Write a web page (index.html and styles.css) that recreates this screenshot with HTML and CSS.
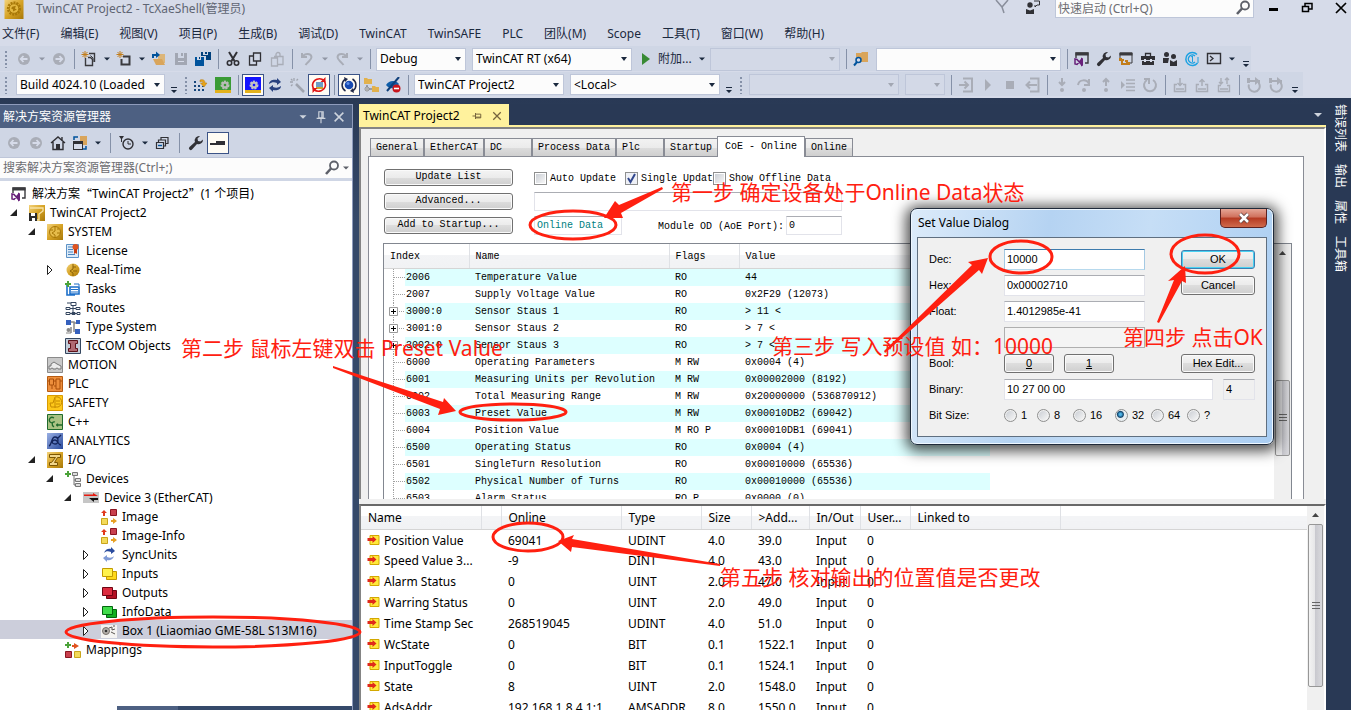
FILE: index.html
```html
<!DOCTYPE html>
<html lang="zh-CN">
<head>
    <meta charset="UTF-8">
    <meta name="viewport" content="width=device-width, initial-scale=1.0">
    <title>TwinCAT Project2 - TcXaeShell</title>
    <link rel="stylesheet" href="styles.css">
</head>
<body>
    <!-- icon sprite -->
    <svg class="sprite" aria-hidden="true">
        <defs>
            <linearGradient id="gold" x1="0" y1="0" x2="1" y2="1"><stop offset="0" stop-color="#f3d27a"/><stop offset=".5" stop-color="#d6a326"/><stop offset="1" stop-color="#a87808"/></linearGradient>
            <linearGradient id="steel" x1="0" y1="0" x2="1" y2="1"><stop offset="0" stop-color="#9ab0e4"/><stop offset="1" stop-color="#27499c"/></linearGradient>
            <symbol id="i-app" viewBox="0 0 20 20"><rect width="20" height="20" fill="url(#gold)"/><circle cx="10" cy="9" r="6" fill="none" stroke="#a87808" stroke-width="3" stroke-dasharray="2 1"/><circle cx="10" cy="9" r="5" fill="#e3b740" stroke="#a87808"/><path d="M8 7l4-1-1 3 2 1-4 2 0-2-2-1z" fill="#a87808"/></symbol>
            <symbol id="i-back" viewBox="0 0 16 16"><circle cx="8" cy="8" r="6" fill="#a9adb7"/><path d="M11.500 8H5M7.500 5L4.700 8l2.800 3" fill="none" stroke="#d6dbe9" stroke-width="1.800"/></symbol>
            <symbol id="i-fwd" viewBox="0 0 16 16"><circle cx="8" cy="8" r="6" fill="#a9adb7"/><path d="M4.500 8H11M8.500 5l2.800 3-2.800 3" fill="none" stroke="#d6dbe9" stroke-width="1.800"/></symbol>
            <symbol id="i-new" viewBox="0 0 16 16"><path d="M8 2.500h5.500V11M4.500 7v7.500h7v-6l-2-2H7" fill="none" stroke="#3a3a3e" stroke-width="1.400"/><path d="M9.500 4.500L12 7v4" fill="none" stroke="#3a3a3e"/><path d="M4 0v7M.5 3.500h7M1.500 1l5 5M6.500 1l-5 5" stroke="#c27d1a"/></symbol>
            <symbol id="i-add" viewBox="0 0 16 16"><path d="M7 5.500h6.500v8h-8V8" fill="none" stroke="#3a3a3e" stroke-width="2"/><path d="M4 0v7M.5 3.500h7M1.500 1l5 5M6.500 1l-5 5" stroke="#c27d1a"/></symbol>
            <symbol id="i-open" viewBox="0 0 16 16"><path d="M7 3h7v9H7z" fill="#dcb67a"/><path d="M2 8h9l3 6H5z" fill="#d9a55b"/><path d="M2 7V4h4" fill="none" stroke="#00539c" stroke-width="2"/><path d="M5 .5L9 4 5 7z" fill="#00539c"/></symbol>
            <symbol id="i-save" viewBox="0 0 16 16"><path d="M2 2h3v5h6V2h3v12H2z" fill="#a2a7b3"/><path d="M8 2h2v3H8z" fill="#a2a7b3"/><path d="M5 10h6v1H5z" fill="#d6dbe9"/></symbol>
            <symbol id="i-saveall" viewBox="0 0 16 16"><path d="M6 1h2v3h5V1h3v8h-5V5H6z" fill="#00407c"/><path d="M10 1h2v2h-2z" fill="#00407c"/><path d="M0 6h2v3h4V6h3v9H0z" fill="#00539c"/><path d="M4 6h1v2H4z" fill="#00407c"/></symbol>
            <symbol id="i-cut" viewBox="0 0 16 16"><path d="M4 1l5.500 9M12 1L6.500 10" stroke="#303035" stroke-width="2"/><circle cx="4.500" cy="12" r="2.200" fill="none" stroke="#303035" stroke-width="1.600"/><circle cx="11.500" cy="12" r="2.200" fill="none" stroke="#303035" stroke-width="1.600"/></symbol>
            <symbol id="i-copy" viewBox="0 0 16 16"><path d="M6.500 10V2h7v8zM6 5H2.500v9h7v-4" fill="none" stroke="#303035" stroke-width="1.300"/></symbol>
            <symbol id="i-paste" viewBox="0 0 16 16"><path d="M5 5.500h9v8H8.500M2.500 7h6v8h-6zM7 5V3.500a2 2 0 0 1 4 0V5" fill="none" stroke="#a9adb7" stroke-width="1.300"/></symbol>
            <symbol id="i-undo" viewBox="0 0 16 16"><path d="M3 2v4h5M3.500 5.500C6 2 12 2 12.500 6c0 3-3 4-6 8" fill="none" stroke="#a9adb7" stroke-width="2"/></symbol>
            <symbol id="i-redo" viewBox="0 0 16 16"><path d="M13 2v4H8M12.500 5.500C10 2 4 2 3.500 6c0 3 3 4 6 8" fill="none" stroke="#a9adb7" stroke-width="2"/></symbol>
            <symbol id="i-play" viewBox="0 0 16 16"><path d="M4 2l8 6-8 6z" fill="#388a34"/></symbol>
            <symbol id="i-find" viewBox="0 0 16 16"><path d="M3 2h5l1-1h6v10H8V6H3z" fill="#d9a55b"/><circle cx="5.500" cy="9" r="2.500" fill="#d6dbe9" stroke="#00539c" stroke-width="1.500"/><path d="M4 11l-3 3.500" stroke="#00539c" stroke-width="2"/></symbol>
            <symbol id="i-vs" viewBox="0 0 16 16"><path d="M2 7V2h12v10h-3" fill="none" stroke="#3a3a3e" stroke-width="1.400"/><path d="M1.500 1.500h13v3h-13z" fill="#3a3a3e"/><path d="M1 8v5l2 .5L7 9v4L3 8.500z" fill="none" stroke="#68217a" stroke-width="1.500"/><path d="M7 6.500l2 1v7l-2 1z" fill="#68217a"/></symbol>
            <symbol id="i-wrench" viewBox="0 0 16 16"><path d="M15 4.500a4.500 4.500 0 0 1-6 4.500L4 14.500a1.700 1.700 0 0 1-2.500-2.500L7 7a4.500 4.500 0 0 1 5-6L9.500 3.500l.500 2.500 2.500.5z" fill="#303035"/></symbol>
            <symbol id="i-props" viewBox="0 0 16 16"><path d="M2 7V2h12v10h-2" fill="none" stroke="#3a3a3e"/><path d="M1.500 1.500h13v3h-13z" fill="#3a3a3e"/><path d="M2 9h4M4 9v4h4M7 10h3" stroke="#c27d1a" stroke-width="2" fill="none"/><path d="M8 11h4v3H8zM1 7h3v3H1z" fill="#c27d1a"/></symbol>
            <symbol id="i-toolbox" viewBox="0 0 16 16"><path d="M5.500 5V2.500h5V5" fill="none" stroke="#303035" stroke-width="1.300"/><path d="M1 5h14v4H1zM2 10h12v4H2z" fill="#303035"/><path d="M4 8h2v3H4zM10 8h2v3h-2z" fill="#d6dbe9"/></symbol>
            <symbol id="i-team" viewBox="0 0 16 16"><circle cx="4.500" cy="3.500" r="2.500" fill="#303035"/><circle cx="11.500" cy="5.500" r="2.500" fill="#303035"/><path d="M1 7h6l-1 5H1zM8 9l3.500 2L15 9v6H8z" fill="#303035"/></symbol>
            <symbol id="i-c1" viewBox="0 0 16 16"><path d="M13 3.500a6.500 6.500 0 1 0 .5 8.500" fill="none" stroke="#1ba1e2" stroke-width="1.500"/><path d="M11 5a4 4 0 1 0 0 6" fill="none" stroke="#1ba1e2" stroke-width="1.400"/><path d="M7 6l1.500-1v6M14 6v6" stroke="#1ba1e2" fill="none"/></symbol>
            <symbol id="i-cmd" viewBox="0 0 16 16"><path d="M1.500 2.500h13v10h-13z" fill="none" stroke="#303035" stroke-width="1.400"/><path d="M4 5l3 2.500L4 10" fill="none" stroke="#303035" stroke-width="1.300"/></symbol>
            <symbol id="i-grid" viewBox="0 0 16 16"><path d="M1 4h2v2H1zM1 8h2v2H1zM1 12h2v2H1zM5 8h2v2H5zM5 12h2v2H5zM9 12h2v2H9zM9 9h2v1H9z" fill="#17467a"/><path d="M7 3c3-1 5 0 5 3h2l-3 4-3.500-4H10c0-1-1-2-3-1z" fill="#e8a317" stroke="#b97a09" stroke-width=".5"/></symbol>
            <symbol id="i-run" viewBox="0 0 16 16"><path d="M0 0h16v13H0z" fill="#3a9b35"/><path d="M0 13h16v3H0z" fill="#e3b21c"/><circle cx="10" cy="8" r="3.500" fill="#b9bcb9" stroke="#b9bcb9" stroke-width="2" stroke-dasharray="2 1"/><circle cx="10" cy="8" r="1.300" fill="#3a9b35"/></symbol>
            <symbol id="i-config" viewBox="0 0 16 16"><path d="M0 0h16v13H0z" fill="#1414ff"/><path d="M0 13h16v3H0z" fill="#e3b21c"/><circle cx="9" cy="8" r="3.500" fill="#c3c3c3" stroke="#c3c3c3" stroke-width="2" stroke-dasharray="2 1"/><circle cx="9" cy="8" r="1.300" fill="#1414ff"/></symbol>
            <symbol id="i-sync" viewBox="0 0 16 16"><path d="M2 7c0-4 5-5 8-4V1l4 4-4 3V6C7 5 5 5 2 7zM14 9c0 4-5 5-8 4v2l-4-4 4-3v2c3 1 5 1 8-1z" fill="#27407f"/></symbol>
            <symbol id="i-syncunit" viewBox="0 0 16 16"><path d="M3 6c1-4 5-5 7-4V0l4 4-4 3V5C7 4 5 4 3 6z" fill="#2a4c9e"/><path d="M13 9c-1 4-5 5-7 4v2l-4-4 4-3v2c3 1 5 1 7-1z" fill="#7f9ad6"/></symbol>
            <symbol id="i-wand" viewBox="0 0 16 16"><path d="M7 7l8 8" stroke="#a0a4af" stroke-width="2.500"/><path d="M5 1v3M1 5h3M2 2l1.500 1.500M9 2L7.500 3.500M2 9l1.500-1.500" stroke="#a0a4af" stroke-width="1.300"/></symbol>
            <symbol id="i-reload" viewBox="0 0 16 16"><path d="M5 5h7v5H5z" fill="#6d9ec7"/><path d="M5 10h7v2H5z" fill="#cfa52a"/><path d="M13 3.500A7 7 0 0 0 1.500 8c0 2 .5 3 1.500 4.500M3 12.500A7 7 0 0 0 14.500 8c0-2-.5-3-1.500-4.500" fill="none" stroke="#e01414" stroke-width="1.700"/><path d="M14.500 0v5h-5zM1.500 16v-5h5z" fill="#e01414"/></symbol>
            <symbol id="i-orbit" viewBox="0 0 16 16"><circle cx="8" cy="8" r="4.300" fill="#1749b0"/><circle cx="7" cy="6.500" r="1.500" fill="#5c8de8"/><path d="M4.500 14A7 7 0 0 1 4 2.300M11.500 2A7 7 0 0 1 12 13.700" fill="none" stroke="#202848" stroke-width="1.500"/><path d="M3 0l4 2-3 3zM13 16l-4-2 3-3z" fill="#202848"/></symbol>
            <symbol id="i-map" viewBox="0 0 16 16"><path d="M1 1h3l1 1h4v5H1zM9 9h3l1 1h3v5H9z" fill="#e2b14c"/><circle cx="4" cy="12" r="2" fill="#fff" stroke="#888"/><path d="M3 12h2M4 8v2M6 12h3" stroke="#666"/></symbol>
            <symbol id="i-hide" viewBox="0 0 16 16"><path d="M1 8c3-5 10-5 13-1-3 5-9 6-13 1z" fill="#0f5da8"/><path d="M14 0L2 14" stroke="#0f3f7a" stroke-width="2"/><circle cx="11.500" cy="11.500" r="4" fill="#c8161d"/><path d="M9 11.500h5" stroke="#fff" stroke-width="1.600"/></symbol>
            <symbol id="i-login" viewBox="0 0 16 16"><path d="M5 1.500h9v13H5M1 8h8M6.500 4.500L10 8l-3.500 3.500" fill="none" stroke="#a9adb7" stroke-width="2"/></symbol>
            <symbol id="i-logout" viewBox="0 0 16 16"><path d="M6 1.500h8.500v13H6M13 8H3M6 4.500L2.500 8 6 11.500" fill="none" stroke="#a9adb7" stroke-width="2"/></symbol>
            <symbol id="i-start" viewBox="0 0 16 16"><path d="M5 2l6 6-6 6z" fill="#a9adb7"/></symbol>
            <symbol id="i-stop" viewBox="0 0 16 16"><path d="M4 4h8v8H4z" fill="#a9adb7"/></symbol>
            <symbol id="i-into" viewBox="0 0 16 16"><path d="M8 1v7M5 5l3 3 3-3" fill="none" stroke="#a9adb7" stroke-width="2"/><circle cx="8" cy="13" r="2" fill="#a9adb7"/></symbol>
            <symbol id="i-over" viewBox="0 0 16 16"><path d="M2 8c1-6 9-6 11-1M13 2v6H8" fill="none" stroke="#a9adb7" stroke-width="2"/><circle cx="8" cy="13" r="2" fill="#a9adb7"/></symbol>
            <symbol id="i-out" viewBox="0 0 16 16"><path d="M8 9V2M5 5l3-3 3 3" fill="none" stroke="#a9adb7" stroke-width="2"/><circle cx="8" cy="13" r="2" fill="#a9adb7"/></symbol>
            <symbol id="i-lines" viewBox="0 0 16 16"><path d="M1 4l4 4-4 4z" fill="#a9adb7"/><path d="M6 3h9M6 6.500h9M6 10h9M6 13.500h9" stroke="#a9adb7" stroke-width="1.400"/></symbol>
            <symbol id="i-cycle" viewBox="0 0 16 16"><path d="M5 3a6 6 0 1 0 6 0M2 2h5v5" fill="none" stroke="#a9adb7" stroke-width="2"/></symbol>
            <symbol id="i-tray1" viewBox="0 0 16 16"><path d="M5 7.500H2.500v7h11v-7H11M4 12h8M8 1v7M5.500 6L8 8.500 10.500 6" fill="none" stroke="#a9adb7" stroke-width="1.500"/></symbol>
            <symbol id="i-tray2" viewBox="0 0 16 16"><path d="M5 7.500H2.500v7h11v-7H11M4 12h8M8 9V2M5.500 5L8 2.500 10.500 5" fill="none" stroke="#a9adb7" stroke-width="1.500"/></symbol>
            <symbol id="i-tray3" viewBox="0 0 16 16"><path d="M5 8.500H2.500v6h11v-6H11M4 12h8M5 1v6M3 5l2 2 2-2M11 7V1M9 3l2-2 2 2" fill="none" stroke="#a9adb7" stroke-width="1.400"/></symbol>
            <symbol id="i-loop" viewBox="0 0 16 16"><path d="M1 4h9M3 7.500a5.500 5.500 0 1 0 10-1V4h-2" fill="none" stroke="#a9adb7" stroke-width="2"/><path d="M9 0l5 4-5 4zM1 1h3v5H1z" fill="#a9adb7"/></symbol>
            <symbol id="i-home" viewBox="0 0 16 16"><path d="M1 8l7-6 7 6M3 7v7.500h10V7M12 2v4" fill="none" stroke="#303035" stroke-width="1.400"/><path d="M6 9h4v5H6z" fill="#303035"/></symbol>
            <symbol id="i-switch" viewBox="0 0 16 16"><path d="M8 1h7v9H8z" fill="#d9a55b"/><path d="M1 6h10v9H1z" fill="#303035"/><path d="M2 9h8v5H2z" fill="#d6dbe9"/><path d="M2 5V2h4M14 11v3h-3" fill="none" stroke="#00539c" stroke-width="1.500"/></symbol>
            <symbol id="i-clock" viewBox="0 0 16 16"><path d="M0 1h5L3 4v3H2V4z" fill="#303035"/><circle cx="9" cy="9" r="5" fill="none" stroke="#303035" stroke-width="1.400"/><path d="M9 6v3h3" fill="none" stroke="#303035"/></symbol>
            <symbol id="i-collapse" viewBox="0 0 16 16"><path d="M2.500 7.500h7v6h-7zM4.500 7V5h7v6H10M7 4.500V2.500h7v6h-2" fill="none" stroke="#303035" stroke-width="1.200"/><path d="M4 10.500h4" stroke="#00539c" stroke-width="1.400"/></symbol>
            <symbol id="i-minus" viewBox="0 0 16 16"><path d="M0 8h15v2H0zM6 6h9v4H6z" fill="#303035"/></symbol>
            <symbol id="i-mag" viewBox="0 0 16 16"><circle cx="10" cy="5.500" r="4" fill="none" stroke="#5d6069" stroke-width="1.800"/><path d="M7 8.500L2 14" stroke="#5d6069" stroke-width="2.600"/></symbol>
            <symbol id="i-x" viewBox="0 0 16 16"><path d="M3 3l10 10M13 3L3 13" stroke="currentColor" stroke-width="1.700"/></symbol>
            <symbol id="i-pin" viewBox="0 0 16 16"><path d="M5.500 2v7h5V2zM9 2v7M3 9.500h10M8 10v5" fill="none" stroke="currentColor" stroke-width="1.300"/></symbol>
            <symbol id="i-pinside" viewBox="0 0 16 16"><path d="M2 8h4M6 4v8M6 5.500h7v5H6M6 9.500h7" fill="none" stroke="currentColor" stroke-width="1.300"/></symbol>
            <symbol id="i-down" viewBox="0 0 16 16"><path d="M4 6h8l-4 4z" fill="currentColor"/></symbol>
            <symbol id="i-more" viewBox="0 0 16 16"><path d="M5 7h6v1H5zM5 10h6l-3 3z" fill="#1b293e"/></symbol>
            <symbol id="i-exp" viewBox="0 0 16 16"><path d="M10 4v7H3z" fill="#222"/></symbol>
            <symbol id="i-col" viewBox="0 0 16 16"><path d="M4.500 3.500v9L9 8z" fill="#fff" stroke="#222"/></symbol>
            <symbol id="i-flag" viewBox="0 0 16 16"><path d="M1 0l6 7 6-7M7 7l2 6" fill="none" stroke="#8a8f9c" stroke-width="1.500"/></symbol>
            <symbol id="i-user" viewBox="0 0 16 16"><circle cx="5" cy="5" r="2.700" fill="#303035"/><path d="M1 9l4 1.500L9 9v5H1z" fill="#303035"/><path d="M9 1h5.500v4H12l-2 2V5" fill="none" stroke="#303035"/></symbol>
            <!-- tree icons -->
            <symbol id="t-project" viewBox="0 0 16 16"><rect width="16" height="16" fill="url(#gold)"/><path d="M1 3h13v3l-4 3v6H8" fill="none" stroke="#f7e3a6" stroke-width="1.300"/><path d="M0 8h8v8H0z" fill="#2b2b2b"/><path d="M2 8h4v3H2zM3 13h3v3H3z" fill="#fff"/></symbol>
            <symbol id="t-system" viewBox="0 0 16 16"><rect width="16" height="16" fill="url(#gold)"/><circle cx="8" cy="8" r="5.500" fill="#e6bc4b" stroke="#a87808"/><path d="M8 2v5l-3 2 3 2v3M10 5h2M10 9h3M3 6h3" fill="none" stroke="#a87808"/></symbol>
            <symbol id="t-license" viewBox="0 0 16 16"><path d="M1.500 1.500h12v13h-12z" fill="#dcebf8" stroke="#5d92c6"/><path d="M3 4h5M3 6.500h5M3 9h5M3 11.500h7" stroke="#4a83bd"/><circle cx="10.500" cy="4" r="3" fill="#e0531f"/><path d="M9 6h3v5l-1.500-1L9 11z" fill="#c83f14"/></symbol>
            <symbol id="t-rt" viewBox="0 0 16 16"><circle cx="8" cy="8" r="6.500" fill="url(#gold)"/><path d="M8 2v5l-3 2 3 2v3M8 5h3M8 9h4" fill="none" stroke="#8b6207"/></symbol>
            <symbol id="t-tasks" viewBox="0 0 16 16"><path d="M2 4v10h8M5 6h9v7H5z" fill="#fff" stroke="#1c6fc9" stroke-width="1.600"/><path d="M6 8.500h7M6 11h7M9 3h5v2" stroke="#1c6fc9" fill="none"/><path d="M3 0v6M0 3h6" stroke="#4ca33a" stroke-width="2"/></symbol>
            <symbol id="t-routes" viewBox="0 0 16 16"><path d="M6 2.500h5v3H6zM1 7.500h4v2H1zM11 7.500h4v2h-4zM1 12.500h4v2H1zM7 12.500h3v2H7zM12 12.500h3v2h-3zM8 6v6M5 8.500h6M2 3h4M5 13.500h7" fill="none" stroke="#34465f"/></symbol>
            <symbol id="t-types" viewBox="0 0 16 16"><path d="M1 1h5v5H1zM11 1h4v4h-4zM10 10h5v5h-5z" fill="#3560bd"/><path d="M6 3h3v10M11 4H9M6 8v6" stroke="#888" fill="none" stroke-width="1.500"/><circle cx="3.500" cy="11" r="2" fill="#888"/><path d="M1 14h5" stroke="#888"/></symbol>
            <symbol id="t-tccom" viewBox="0 0 16 16"><path d="M.5 .5h15v15H.5z" fill="#c2ccd8" stroke="#34465f"/><path d="M3.500 2.500h9v3h-2v5h2v3h-9v-3h2v-5h-2z" fill="#b06a72" stroke="#5c1219"/></symbol>
            <symbol id="t-motion" viewBox="0 0 16 16"><path d="M.5 .5h15v15H.5z" fill="#c9c9c9" stroke="#8a8a8a"/><path d="M2 12V9h2V7l3-2 3 2 4 2v3h-3a1 1 0 0 0-2 0H6a1 1 0 0 0-2 0z" fill="#ececec" stroke="#777"/></symbol>
            <symbol id="t-plc" viewBox="0 0 16 16"><path d="M.5 .5h15v15H.5z" fill="#ee8f3c" stroke="#b65b12"/><path d="M2.500 3h4v6h-4zM9 3h4v10H9zM1 5h1M7 5h2M7 10h2M5 9v4M13 5h2" fill="none" stroke="#a94f0b"/></symbol>
            <symbol id="t-safety" viewBox="0 0 16 16"><path d="M.5 .5h15v15H.5z" fill="#fdc81a" stroke="#d99b00"/><path d="M8 2a5 5 0 0 1 3 10H4l-1-4h3zM8 3v10M9 6h4M9 9h4" fill="none" stroke="#c68a00"/></symbol>
            <symbol id="t-cpp" viewBox="0 0 16 16"><path d="M.5 .5h15v15H.5z" fill="#a9c283" stroke="#1f6a2b"/><path d="M7 4C4 2 1 5 3 8l2 1M8 8c-3-1-4 3-1 5M9 11h3M10.500 9.500v3M12 11h3" fill="none" stroke="#1f6a2b" stroke-width="1.300"/></symbol>
            <symbol id="t-analytics" viewBox="0 0 16 16"><rect width="16" height="16" fill="url(#steel)"/><path d="M2 13c3-1 2-9 6-9s4 7 0 7-3-4 0-4 3 5 6 5M10 6l4-4" fill="none" stroke="#12245c" stroke-width="1.300"/></symbol>
            <symbol id="t-io" viewBox="0 0 16 16"><rect width="16" height="16" fill="url(#gold)"/><path d="M2.500 2.500h11v3h-3l-3 5h3v3h-8v-3h2l4-5h-6z" fill="#f1d589" stroke="#7c5602"/></symbol>
            <symbol id="t-devices" viewBox="0 0 16 16"><path d="M7.500 1.500h5v3h-5zM10.500 7.500h5v3h-5zM10.500 12.500h5v3h-5zM9 5v9h1M9 9h1" fill="#ddd" stroke="#777"/><path d="M3 0v6M0 3h6" stroke="#4ca33a" stroke-width="2"/></symbol>
            <symbol id="t-ethercat" viewBox="0 0 16 16"><path d="M0 2h16v11H0z" fill="#c6c6c6"/><path d="M1 4.500h9V3l5 3H1z" fill="#e81b10"/><path d="M15 8H6l5 4v-2h4z" fill="#111"/></symbol>
            <symbol id="t-image" viewBox="0 0 16 16"><path d="M9.500 .5h6v6h-6z" fill="#c9404e" stroke="#8a1521"/><path d="M.5 9.500h6v6h-6z" fill="#f3da5a" stroke="#c9a51c"/><path d="M3 1l3 3H4v3H2V4H0z" fill="#e0391c"/><path d="M12 9v2h-2v2h2v2l4-3z" fill="#e7a023"/></symbol>
            <symbol id="t-in" viewBox="0 0 16 16"><path d="M5.500 5.500h10v8h-10z" fill="#ffd91a" stroke="#c29a00"/><path d="M1.500 2.500h10v8h-10z" fill="#fff34d" stroke="#c29a00"/></symbol>
            <symbol id="t-out" viewBox="0 0 16 16"><path d="M5.500 5.500h10v8h-10z" fill="#b30f22" stroke="#6e0512"/><path d="M1.500 2.500h10v8h-10z" fill="#dd2b3f" stroke="#6e0512"/></symbol>
            <symbol id="t-info" viewBox="0 0 16 16"><path d="M5.500 5.500h10v8h-10z" fill="#0faf22" stroke="#03660e"/><path d="M1.500 2.500h10v8h-10z" fill="#3fdc4a" stroke="#03660e"/></symbol>
            <symbol id="t-box" viewBox="0 0 16 16"><path d="M0 2h16v13H0z" fill="#f5f3f1"/><circle cx="5" cy="8" r="3.500" fill="#b5b0ab" stroke="#77706a"/><circle cx="5" cy="8" r="1.300" fill="#333"/><path d="M8 5l3-1v3l3-1M10 9l4 2M12 3h2" fill="none" stroke="#5a5550"/></symbol>
            <symbol id="t-mappings" viewBox="0 0 16 16"><path d="M.5 9.500h6v6h-6z" fill="#c9404e" stroke="#8a1521"/><path d="M9.500 9.500h6v6h-6z" fill="#f3da5a" stroke="#c9a51c"/><path d="M3 0v6M0 3h6" stroke="#4ca33a" stroke-width="2"/><path d="M7 3h2V1l5 3-5 3V5H7z" fill="#e0531f"/></symbol>
            <symbol id="t-var" viewBox="0 0 12 12"><path d="M2.500 1.500h9v9h-9z" fill="#ffe93b" stroke="#d3a800"/><path d="M0 4h5V2l4 3.500L5 9V7H0z" fill="#e02a1a"/></symbol>
            <symbol id="t-leaf" viewBox="0 0 21 17"><path d="M9.500 0v17" stroke="#a0a0a0" stroke-dasharray="1 1"/><path d="M10 8.500h11" stroke="#a0a0a0" stroke-dasharray="1 1"/></symbol>
            <symbol id="t-plus" viewBox="0 0 21 17"><path d="M9.500 0v17M13 8.500h8" stroke="#a0a0a0" stroke-dasharray="1 1"/><path d="M5.500 4.500h8v8h-8z" fill="#fff" stroke="#9a9a9a"/><path d="M7 8.500h5M9.500 6v5" stroke="#000"/></symbol>
        </defs>
    </svg>

    <header>
        <div class="titlebar">
            <svg class="app-icon"><use href="#i-app"/></svg>
            <span class="title">TwinCAT Project2 - TcXaeShell(管理员)</span>
            <div class="title-tools">
                <svg class="icon"><use href="#i-flag"/></svg>
                <svg class="icon"><use href="#i-user"/></svg>
                <div class="quick">
                    <input type="text" placeholder="快速启动 (Ctrl+Q)" aria-label="快速启动">
                    <svg class="icon"><use href="#i-mag"/></svg>
                </div>
                <button class="win" aria-label="最小化"><svg class="icon" viewBox="0 0 16 16"><path d="M4 8h9v3H4z"/></svg></button>
                <button class="win" aria-label="还原"><svg class="icon" viewBox="0 0 16 16"><path d="M6 6V3.500h7V9h-3M3.500 6.500h6v5h-6z" fill="none" stroke="#000" stroke-width="1.500"/></svg></button>
                <button class="win" aria-label="关闭"><svg class="icon"><use href="#i-x"/></svg></button>
            </div>
        </div>
        <nav class="menu">
            <a href="#">文件(F)</a><a href="#">编辑(E)</a><a href="#">视图(V)</a><a href="#">项目(P)</a><a href="#">生成(B)</a><a href="#">调试(D)</a><a href="#">TwinCAT</a><a href="#">TwinSAFE</a><a href="#">PLC</a><a href="#">团队(M)</a><a href="#">Scope</a><a href="#">工具(T)</a><a href="#">窗口(W)</a><a href="#">帮助(H)</a>
        </nav>
        <div class="toolbar">
            <span class="grip"></span>
            <button class="tool" aria-label="后退"><svg class="icon"><use href="#i-back"/></svg></button>
            <button class="drop off" aria-label="后退列表"><svg class="icon"><use href="#i-down"/></svg></button>
            <button class="tool" aria-label="前进"><svg class="icon"><use href="#i-fwd"/></svg></button>
            <span class="sep"></span>
            <button class="tool" aria-label="新建项目"><svg class="icon"><use href="#i-new"/></svg></button>
            <button class="drop" aria-label="新建列表"><svg class="icon"><use href="#i-down"/></svg></button>
            <button class="tool" aria-label="添加项"><svg class="icon"><use href="#i-add"/></svg></button>
            <button class="drop" aria-label="添加列表"><svg class="icon"><use href="#i-down"/></svg></button>
            <button class="tool" aria-label="打开"><svg class="icon"><use href="#i-open"/></svg></button>
            <button class="tool" aria-label="保存"><svg class="icon"><use href="#i-save"/></svg></button>
            <button class="tool" aria-label="全部保存"><svg class="icon"><use href="#i-saveall"/></svg></button>
            <span class="sep"></span>
            <button class="tool" aria-label="剪切"><svg class="icon"><use href="#i-cut"/></svg></button>
            <button class="tool" aria-label="复制"><svg class="icon"><use href="#i-copy"/></svg></button>
            <button class="tool" aria-label="粘贴"><svg class="icon"><use href="#i-paste"/></svg></button>
            <span class="sep"></span>
            <button class="tool" aria-label="撤消"><svg class="icon"><use href="#i-undo"/></svg></button>
            <button class="drop off" aria-label="撤消列表"><svg class="icon"><use href="#i-down"/></svg></button>
            <button class="tool" aria-label="重做"><svg class="icon"><use href="#i-redo"/></svg></button>
            <button class="drop off" aria-label="重做列表"><svg class="icon"><use href="#i-down"/></svg></button>
            <span class="sep"></span>
            <select class="combo w90" aria-label="配置"><option>Debug</option></select>
            <select class="combo w160" aria-label="平台"><option>TwinCAT RT (x64)</option></select>
            <button class="attach"><svg class="icon"><use href="#i-play"/></svg>附加...<svg class="icon"><use href="#i-down"/></svg></button>
            <select class="combo w130" aria-label="进程" disabled><option></option></select>
            <span class="sep"></span>
            <button class="tool" aria-label="在文件中查找"><svg class="icon"><use href="#i-find"/></svg></button>
            <select class="combo w185" aria-label="查找"><option></option></select>
            <span class="sep"></span>
            <button class="tool" aria-label="解决方案"><svg class="icon"><use href="#i-vs"/></svg></button>
            <button class="tool" aria-label="属性"><svg class="icon"><use href="#i-wrench"/></svg></button>
            <button class="tool" aria-label="对象"><svg class="icon"><use href="#i-props"/></svg></button>
            <button class="tool" aria-label="工具箱"><svg class="icon"><use href="#i-toolbox"/></svg></button>
            <button class="tool" aria-label="团队"><svg class="icon"><use href="#i-team"/></svg></button>
            <button class="tool" aria-label="起始页"><svg class="icon"><use href="#i-c1"/></svg></button>
            <button class="tool" aria-label="命令窗口"><svg class="icon"><use href="#i-cmd"/></svg></button>
            <button class="drop" aria-label="窗口列表"><svg class="icon"><use href="#i-down"/></svg></button>
            <button class="more" aria-label="工具栏选项"><svg class="icon"><use href="#i-more"/></svg></button>
        </div>
        <div class="toolbar second">
            <span class="grip"></span>
            <select class="combo w149 end" aria-label="版本"><option>Build 4024.10 (Loaded</option></select>
            <button class="more" aria-label="工具栏选项"><svg class="icon"><use href="#i-more"/></svg></button>
            <span class="grip"></span>
            <button class="tool" aria-label="激活配置"><svg class="icon"><use href="#i-grid"/></svg></button>
            <button class="tool" aria-label="运行模式"><svg class="icon"><use href="#i-run"/></svg></button>
            <span class="sep"></span>
            <button class="tool on" aria-label="配置模式"><svg class="icon"><use href="#i-config"/></svg></button>
            <button class="tool" aria-label="重新加载设备"><svg class="icon"><use href="#i-sync"/></svg></button>
            <button class="tool" aria-label="扫描"><svg class="icon"><use href="#i-wand"/></svg></button>
            <button class="tool on" aria-label="自由运行"><svg class="icon"><use href="#i-reload"/></svg></button>
            <span class="sep"></span>
            <button class="tool on" aria-label="在线数据"><svg class="icon"><use href="#i-orbit"/></svg></button>
            <button class="tool" aria-label="子项"><svg class="icon"><use href="#i-map"/></svg></button>
            <button class="tool" aria-label="隐藏禁用项"><svg class="icon"><use href="#i-hide"/></svg></button>
            <span class="sep"></span>
            <select class="combo w150" aria-label="项目"><option>TwinCAT Project2</option></select>
            <select class="combo w150 end" aria-label="目标系统"><option>&lt;Local&gt;</option></select>
            <button class="more" aria-label="工具栏选项"><svg class="icon"><use href="#i-more"/></svg></button>
            <span class="grip"></span>
            <select class="combo w150" aria-label="PLC 项目" disabled><option></option></select>
            <select class="combo w40" aria-label="端口" disabled><option></option></select>
            <span class="sep"></span>
            <button class="tool" aria-label="登录"><svg class="icon"><use href="#i-login"/></svg></button>
            <button class="tool" aria-label="启动"><svg class="icon"><use href="#i-start"/></svg></button>
            <button class="tool" aria-label="停止"><svg class="icon"><use href="#i-stop"/></svg></button>
            <button class="tool" aria-label="注销"><svg class="icon"><use href="#i-logout"/></svg></button>
            <span class="sep"></span>
            <button class="tool" aria-label="逐语句"><svg class="icon"><use href="#i-into"/></svg></button>
            <button class="tool" aria-label="逐过程"><svg class="icon"><use href="#i-over"/></svg></button>
            <button class="tool" aria-label="跳出"><svg class="icon"><use href="#i-out"/></svg></button>
            <button class="tool" aria-label="当前行"><svg class="icon"><use href="#i-lines"/></svg></button>
            <button class="tool" aria-label="单周期"><svg class="icon"><use href="#i-cycle"/></svg></button>
            <span class="sep"></span>
            <button class="tool" aria-label="写入"><svg class="icon"><use href="#i-tray1"/></svg></button>
            <button class="tool" aria-label="强制"><svg class="icon"><use href="#i-tray2"/></svg></button>
            <button class="tool" aria-label="释放"><svg class="icon"><use href="#i-tray3"/></svg></button>
            <span class="sep"></span>
            <button class="tool" aria-label="热复位"><svg class="icon"><use href="#i-loop"/></svg></button>
            <button class="tool" aria-label="冷复位"><svg class="icon"><use href="#i-loop"/></svg></button>
            <button class="more" aria-label="工具栏选项"><svg class="icon"><use href="#i-more"/></svg></button>
        </div>
    </header>

    <main>
        <aside class="explorer">
            <div class="panel-title">
                <span>解决方案资源管理器</span>
                <svg class="icon"><use href="#i-down"/></svg>
                <svg class="icon"><use href="#i-pin"/></svg>
                <svg class="icon"><use href="#i-x"/></svg>
            </div>
            <div class="panel-tools">
                <button class="tool" aria-label="后退"><svg class="icon"><use href="#i-back"/></svg></button>
                <button class="tool" aria-label="前进"><svg class="icon"><use href="#i-fwd"/></svg></button>
                <button class="tool" aria-label="主页"><svg class="icon"><use href="#i-home"/></svg></button>
                <button class="tool" aria-label="切换视图"><svg class="icon"><use href="#i-switch"/></svg></button>
                <button class="drop" aria-label="视图列表"><svg class="icon"><use href="#i-down"/></svg></button>
                <span class="sep"></span>
                <button class="tool" aria-label="挂起的更改"><svg class="icon"><use href="#i-clock"/></svg></button>
                <button class="drop" aria-label="筛选列表"><svg class="icon"><use href="#i-down"/></svg></button>
                <button class="tool" aria-label="全部折叠"><svg class="icon"><use href="#i-collapse"/></svg></button>
                <span class="sep"></span>
                <button class="tool" aria-label="属性"><svg class="icon"><use href="#i-wrench"/></svg></button>
                <button class="tool on" aria-label="预览"><svg class="icon"><use href="#i-minus"/></svg></button>
            </div>
            <div class="panel-search">
                <input type="text" placeholder="搜索解决方案资源管理器(Ctrl+;)" aria-label="搜索解决方案资源管理器">
                <svg class="icon"><use href="#i-mag"/></svg>
                <svg class="icon"><use href="#i-down"/></svg>
            </div>
            <ul class="tree">
                <li class="root"><svg class="icon"><use href="#i-vs"/></svg>解决方案<span class="quote">“</span>TwinCAT Project2<span class="quote">”</span>(1 个项目)</li>
                <li><svg class="arrow"><use href="#i-exp"/></svg><svg class="icon"><use href="#t-project"/></svg>TwinCAT Project2</li>
                <li class="l1"><svg class="arrow"><use href="#i-exp"/></svg><svg class="icon"><use href="#t-system"/></svg>SYSTEM</li>
                <li class="l2"><svg class="arrow"></svg><svg class="icon"><use href="#t-license"/></svg>License</li>
                <li class="l2"><svg class="arrow"><use href="#i-col"/></svg><svg class="icon"><use href="#t-rt"/></svg>Real-Time</li>
                <li class="l2"><svg class="arrow"></svg><svg class="icon"><use href="#t-tasks"/></svg>Tasks</li>
                <li class="l2"><svg class="arrow"></svg><svg class="icon"><use href="#t-routes"/></svg>Routes</li>
                <li class="l2"><svg class="arrow"></svg><svg class="icon"><use href="#t-types"/></svg>Type System</li>
                <li class="l2"><svg class="arrow"></svg><svg class="icon"><use href="#t-tccom"/></svg>TcCOM Objects</li>
                <li class="l1"><svg class="arrow"></svg><svg class="icon"><use href="#t-motion"/></svg>MOTION</li>
                <li class="l1"><svg class="arrow"></svg><svg class="icon"><use href="#t-plc"/></svg>PLC</li>
                <li class="l1"><svg class="arrow"></svg><svg class="icon"><use href="#t-safety"/></svg>SAFETY</li>
                <li class="l1"><svg class="arrow"></svg><svg class="icon"><use href="#t-cpp"/></svg>C++</li>
                <li class="l1"><svg class="arrow"></svg><svg class="icon"><use href="#t-analytics"/></svg>ANALYTICS</li>
                <li class="l1"><svg class="arrow"><use href="#i-exp"/></svg><svg class="icon"><use href="#t-io"/></svg>I/O</li>
                <li class="l2"><svg class="arrow"><use href="#i-exp"/></svg><svg class="icon"><use href="#t-devices"/></svg>Devices</li>
                <li class="l3"><svg class="arrow"><use href="#i-exp"/></svg><svg class="icon"><use href="#t-ethercat"/></svg>Device 3 (EtherCAT)</li>
                <li class="l4"><svg class="arrow"></svg><svg class="icon"><use href="#t-image"/></svg>Image</li>
                <li class="l4"><svg class="arrow"></svg><svg class="icon"><use href="#t-image"/></svg>Image-Info</li>
                <li class="l4"><svg class="arrow"><use href="#i-col"/></svg><svg class="icon"><use href="#i-syncunit"/></svg>SyncUnits</li>
                <li class="l4"><svg class="arrow"><use href="#i-col"/></svg><svg class="icon"><use href="#t-in"/></svg>Inputs</li>
                <li class="l4"><svg class="arrow"><use href="#i-col"/></svg><svg class="icon"><use href="#t-out"/></svg>Outputs</li>
                <li class="l4"><svg class="arrow"><use href="#i-col"/></svg><svg class="icon"><use href="#t-info"/></svg>InfoData</li>
                <li class="l4 selected"><svg class="arrow"><use href="#i-col"/></svg><svg class="icon"><use href="#t-box"/></svg>Box 1 (Liaomiao GME-58L S13M16)</li>
                <li class="l2"><svg class="arrow"></svg><svg class="icon"><use href="#t-mappings"/></svg>Mappings</li>
            </ul>
            <div class="panel-tabs"><span class="tab-on"></span><span class="tab-off"></span></div>
        </aside>

        <section class="editor">
            <div class="doc-tabs">
                <div class="doc-tab">TwinCAT Project2 <svg class="icon"><use href="#i-pinside"/></svg><svg class="icon"><use href="#i-x"/></svg></div>
                <svg class="icon list"><use href="#i-down"/></svg>
            </div>
            <div class="upper">
                <div class="prop-tabs">
                    <button>General</button><button>EtherCAT</button><button class="t48">DC</button><button>Process Data</button><button class="t48">Plc</button><button>Startup</button><button class="current">CoE - Online</button><button>Online</button>
                </div>
                <div class="page">
                    <div class="form">
                        <button class="btn">Update List</button>
                        <div class="line">
                            <label class="w91"><input type="checkbox">Auto Update</label>
                            <label class="w88"><input type="checkbox" checked>Single Updat</label>
                            <label><input type="checkbox">Show Offline Data</label>
                        </div>
                        <button class="btn">Advanced...</button>
                        <div class="line"><input class="box path" type="text" aria-label="路径" readonly></div>
                        <button class="btn">Add to Startup...</button>
                        <div class="line">
                            <input class="box state" type="text" value="Online Data" aria-label="状态" readonly>
                            <label for="port">Module OD (AoE Port):</label>
                            <input class="box port" id="port" type="text" value="0">
                        </div>
                    </div>
                    <div class="list-box">
                        <table class="coe">
                            <colgroup><col class="c-index"><col class="c-name"><col class="c-flags"><col class="c-value"><col></colgroup>
                            <thead><tr><th>Index</th><th>Name</th><th>Flags</th><th>Value</th><th></th></tr></thead>
                            <tbody>
                                <tr><td><svg class="branch"><use href="#t-leaf"/></svg>2006</td><td>Temperature Value</td><td>RO</td><td>44</td><td></td></tr>
                                <tr><td><svg class="branch"><use href="#t-leaf"/></svg>2007</td><td>Supply Voltage Value</td><td>RO</td><td>0x2F29 (12073)</td><td></td></tr>
                                <tr><td><svg class="branch"><use href="#t-plus"/></svg>3000:0</td><td>Sensor Staus 1</td><td>RO</td><td>&gt; 11 &lt;</td><td></td></tr>
                                <tr><td><svg class="branch"><use href="#t-plus"/></svg>3001:0</td><td>Sensor Staus 2</td><td>RO</td><td>&gt; 7 &lt;</td><td></td></tr>
                                <tr><td><svg class="branch"><use href="#t-plus"/></svg>3002:0</td><td>Sensor Staus 3</td><td>RO</td><td>&gt; 7 &lt;</td><td></td></tr>
                                <tr><td><svg class="branch"><use href="#t-leaf"/></svg>6000</td><td>Operating Parameters</td><td>M RW</td><td>0x0004 (4)</td><td></td></tr>
                                <tr><td><svg class="branch"><use href="#t-leaf"/></svg>6001</td><td>Measuring Units per Revolution</td><td>M RW</td><td>0x00002000 (8192)</td><td></td></tr>
                                <tr><td><svg class="branch"><use href="#t-leaf"/></svg>6002</td><td>Total Measuring Range</td><td>M RW</td><td>0x20000000 (536870912)</td><td></td></tr>
                                <tr><td><svg class="branch"><use href="#t-leaf"/></svg>6003</td><td>Preset Value</td><td>M RW</td><td>0x00010DB2 (69042)</td><td></td></tr>
                                <tr><td><svg class="branch"><use href="#t-leaf"/></svg>6004</td><td>Position Value</td><td>M RO P</td><td>0x00010DB1 (69041)</td><td></td></tr>
                                <tr><td><svg class="branch"><use href="#t-leaf"/></svg>6500</td><td>Operating Status</td><td>RO</td><td>0x0004 (4)</td><td></td></tr>
                                <tr><td><svg class="branch"><use href="#t-leaf"/></svg>6501</td><td>SingleTurn Resolution</td><td>RO</td><td>0x00010000 (65536)</td><td></td></tr>
                                <tr><td><svg class="branch"><use href="#t-leaf"/></svg>6502</td><td>Physical Number of Turns</td><td>RO</td><td>0x00010000 (65536)</td><td></td></tr>
                                <tr><td><svg class="branch"><use href="#t-leaf"/></svg>6503</td><td>Alarm Status</td><td>RO P</td><td>0x0000 (0)</td><td></td></tr>
                            </tbody>
                        </table>
                        <div class="scroll coe-scroll"><span class="up"></span><span class="before"></span><span class="thumb"></span><span class="after"></span></div>
                    </div>
                </div>
            </div>
            <div class="lower">
                <table class="vars">
                    <colgroup><col class="v-name"><col class="v-gap"><col class="v-online"><col class="v-type"><col class="v-size"><col class="v-addr"><col class="v-io"><col class="v-io"><col class="v-link"><col></colgroup>
                    <thead><tr><th>Name</th><th></th><th>Online</th><th>Type</th><th>Size</th><th>&gt;Add...</th><th>In/Out</th><th>User...</th><th>Linked to</th><th></th></tr></thead>
                    <tbody>
                        <tr><td><svg class="var"><use href="#t-var"/></svg>Position Value</td><td></td><td>69041</td><td>UDINT</td><td>4.0</td><td>39.0</td><td>Input</td><td>0</td><td></td><td></td></tr>
                        <tr><td><svg class="var"><use href="#t-var"/></svg>Speed Value 3...</td><td></td><td>-9</td><td>DINT</td><td>4.0</td><td>43.0</td><td>Input</td><td>0</td><td></td><td></td></tr>
                        <tr><td><svg class="var"><use href="#t-var"/></svg>Alarm Status</td><td></td><td>0</td><td>UINT</td><td>2.0</td><td>47.0</td><td>Input</td><td>0</td><td></td><td></td></tr>
                        <tr><td><svg class="var"><use href="#t-var"/></svg>Warring Status</td><td></td><td>0</td><td>UINT</td><td>2.0</td><td>49.0</td><td>Input</td><td>0</td><td></td><td></td></tr>
                        <tr><td><svg class="var"><use href="#t-var"/></svg>Time Stamp Sec</td><td></td><td>268519045</td><td>UDINT</td><td>4.0</td><td>51.0</td><td>Input</td><td>0</td><td></td><td></td></tr>
                        <tr><td><svg class="var"><use href="#t-var"/></svg>WcState</td><td></td><td>0</td><td>BIT</td><td>0.1</td><td>1522.1</td><td>Input</td><td>0</td><td></td><td></td></tr>
                        <tr><td><svg class="var"><use href="#t-var"/></svg>InputToggle</td><td></td><td>0</td><td>BIT</td><td>0.1</td><td>1524.1</td><td>Input</td><td>0</td><td></td><td></td></tr>
                        <tr><td><svg class="var"><use href="#t-var"/></svg>State</td><td></td><td>8</td><td>UINT</td><td>2.0</td><td>1548.0</td><td>Input</td><td>0</td><td></td><td></td></tr>
                        <tr><td><svg class="var"><use href="#t-var"/></svg>AdsAddr</td><td></td><td>192.168.1.8.4.1:1</td><td>AMSADDR</td><td>8.0</td><td>1550.0</td><td>Input</td><td>0</td><td></td><td></td></tr>
                    </tbody>
                </table>
                <div class="scroll var-scroll"><span class="up"></span><span class="thumb"></span><span class="after"></span></div>
            </div>
        </section>

        <nav class="side">
            <a href="#">错误列表</a><a href="#">输出</a><a href="#">属性</a><a href="#">工具箱</a>
        </nav>
    </main>

    <div class="dialog" role="dialog" aria-labelledby="dlg-title">
        <div class="dlg-bar">
            <span id="dlg-title">Set Value Dialog</span>
            <button class="dlg-close" aria-label="Close"><svg class="icon" viewBox="0 0 16 16"><path d="M4 4l8 8M12 4l-8 8" stroke="#5b3c3c" stroke-width="4"/><path d="M4 4l8 8M12 4l-8 8" stroke="#fff" stroke-width="2.500"/></svg></button>
        </div>
        <form class="dlg-body">
            <div class="row"><label for="dec">Dec:</label><input class="box focus" id="dec" type="text" value="10000"><button class="btn ok" type="button">OK</button></div>
            <div class="row"><label for="hex">Hex:</label><input class="box" id="hex" type="text" value="0x00002710"><button class="btn" type="button">Cancel</button></div>
            <div class="row"><label for="float">Float:</label><input class="box" id="float" type="text" value="1.4012985e-41"></div>
            <div class="row"><label for="str"></label><input class="box grey" id="str" type="text" disabled aria-label="String"></div>
            <div class="row"><span class="label">Bool:</span><button class="btn bool" type="button"><u>0</u></button><button class="btn bool" type="button"><u>1</u></button><button class="btn" type="button">Hex Edit...</button></div>
            <div class="row"><label for="bin">Binary:</label><input class="box wide" id="bin" type="text" value="10 27 00 00"><input class="box grey len" type="text" value="4" readonly aria-label="Length"></div>
            <div class="row"><span class="label">Bit Size:</span>
                <label class="bit one"><input type="radio" name="bits">1</label><label class="bit"><input type="radio" name="bits">8</label><label class="bit two"><input type="radio" name="bits">16</label><label class="bit"><input type="radio" name="bits" checked>32</label><label class="bit"><input type="radio" name="bits">64</label><label class="bit"><input type="radio" name="bits">?</label>
            </div>
        </form>
    </div>

    <!-- step marks drawn over the windows -->
    <svg class="marks" aria-hidden="true">
        <g fill="none" stroke="#ff2010" stroke-width="3">
            <ellipse cx="573" cy="225" rx="43" ry="14"/>
            <ellipse cx="513" cy="412" rx="53" ry="8"/>
            <ellipse cx="528" cy="537" rx="35" ry="14"/>
            <ellipse cx="213" cy="632" rx="147" ry="15"/>
            <ellipse cx="1021" cy="257" rx="31" ry="16"/>
            <ellipse cx="1205" cy="254" rx="34" ry="19"/>
        </g>
        <g fill="#ff2010">
            <path d="M662 187L619 205 615 201 604 218 623 218 621 213 663 189z"/>
            <path d="M333 366L443 402 444 398 456 411 438 415 440 409 333 368z"/>
            <path d="M884 351L972 265 968 262 988 258 982 274 979 270 885 353z"/>
            <path d="M1157 322L1174 280 1168 281 1185 266 1186 283 1182 281 1159 323z"/>
            <path d="M720 564L572 539 574 535 558 541 571 552 572 547 720 566z"/>
        </g>
    </svg>
    <p class="step s1">第一步 确定设备处于Online Data状态</p>
    <p class="step s2">第二步 鼠标左键双击 Preset Value</p>
    <p class="step s3">第三步 写入预设值 如：10000</p>
    <p class="step s4">第四步 点击OK</p>
    <p class="step s5">第五步 核对输出的位置值是否更改</p>
</body>
</html>
```
FILE: styles.css
```css
* {
    box-sizing: border-box;
}

body {
    margin: 0;
    height: 100vh;
    display: flex;
    flex-direction: column;
    position: relative;
    overflow: hidden;
    background: #293955;
    color: #000;
    font: 12px/16px "Noto Sans", "Noto Sans CJK SC", sans-serif;
}

button,
input,
select {
    font: inherit;
    color: inherit;
    margin: 0;
    padding: 0;
}

button {
    border: 0;
    background: none;
}

a {
    color: inherit;
    text-decoration: none;
}

.sprite {
    position: absolute;
    width: 0;
    height: 0;
}

.icon {
    width: 16px;
    height: 16px;
    flex: none;
    display: block;
}

/* ---- header ---- */
header {
    background: #d6dbe9;
    height: 98px;
    flex: none;
    color: #1b293e;
}

.titlebar {
    display: flex;
    height: 20px;
    padding-left: 4px;
    line-height: 18px;
    color: #5f6573;
}

.app-icon {
    width: 20px;
    height: 19px;
}

.title {
    margin-left: 12px;
}

.title-tools {
    margin-left: auto;
    display: flex;
}

.title-tools > .icon {
    margin-right: 14px;
}

.quick {
    display: flex;
    width: 199px;
    height: 18px;
    margin-right: 11px;
    padding: 0 2px;
    background: #fcfcfc;
    border: 1px solid #bec6d9;
    border-top: 0;
}

.quick input,
.panel-search input {
    flex: 1;
    min-width: 0;
    border: 0;
    background: none;
    outline: 0;
}

.quick input::placeholder,
.panel-search input::placeholder {
    color: #6d6d72;
    opacity: 1;
}

.win {
    width: 18px;
    margin-right: 16px;
    color: #000;
}

.win .icon {
    margin: -4px 0 0;
}

.win:last-child {
    margin-right: 0;
}

.menu {
    display: flex;
    gap: 21px;
    height: 26px;
    padding-left: 2px;
    line-height: 28px;
}

.toolbar {
    display: flex;
    align-items: center;
    height: 26px;
    padding-left: 4px;
    background: linear-gradient(#cfd6e5, #cfd6e5) no-repeat 0 0 / 1251px 25px;
}

.toolbar.second {
    background-size: 1303px 24px;
    height: 25px;
}

.grip {
    width: 5px;
    height: 18px;
    margin-right: 4px;
    flex: none;
    background: radial-gradient(circle, #8591a8 1px, transparent 1px) 0 0 / 4px 4px;
}

.second .grip {
    margin: 0 1px 0 2px;
}

.second .grip:first-child {
    margin: 0 3px 0 0;
}

.tool {
    width: 22px;
    height: 22px;
    flex: none;
    display: flex;
    align-items: center;
    justify-content: center;
}

.tool.on {
    background: #fffcf4;
    border: 1px solid #3c5487;
}

.drop {
    width: 13px;
    display: flex;
    justify-content: center;
    flex: none;
    color: #1b293e;
}

.drop.off {
    color: #9096a4;
}

.drop .icon,
.attach .icon:last-child {
    width: 12px;
}

.more {
    width: 16px;
    flex: none;
    padding-top: 6px;
}

.sep {
    width: 8px;
    height: 20px;
    flex: none;
    background: linear-gradient(#8591a8, #8591a8) center / 1px 100% no-repeat;
}

.combo {
    appearance: none;
    flex: none;
    height: 23px;
    margin-right: 6px;
    padding: 0 14px 0 3px;
    color: #000;
    border: 1px solid #bec6d9;
    border-radius: 0;
    background: #fcfcfc url("data:image/svg+xml,%3Csvg xmlns='http://www.w3.org/2000/svg' width='6' height='4'%3E%3Cpath d='M0 0h6L3 4z' fill='%231b293e'/%3E%3C/svg%3E") no-repeat right 4px center;
}

.combo:disabled {
    background-color: #d3d9e7;
    background-image: url("data:image/svg+xml,%3Csvg xmlns='http://www.w3.org/2000/svg' width='6' height='4'%3E%3Cpath d='M0 0h6L3 4z' fill='%23a2a7b3'/%3E%3C/svg%3E");
    opacity: 1;
}

.second .combo {
    height: 21px;
}

.sep + .combo {
    margin-left: 2px;
}

.grip + .combo,
.tool + .combo {
    margin-left: 4px;
}

.combo.end {
    margin-right: 1px;
}

.w40 { width: 40px; }
.w90 { width: 90px; }
.w130 { width: 130px; }
.w149 { width: 149px; }
.w150 { width: 150px; }
.w160 { width: 160px; }
.w185 { width: 185px; }

.w130,
.w185,
.w40 {
    margin-right: 2px;
}

.attach {
    display: flex;
    width: 72px;
    gap: 4px;
    flex: none;
}

/* ---- main area ---- */
main {
    flex: 1;
    min-height: 0;
    display: flex;
    padding-top: 6px;
    background: linear-gradient(#293955, #35496a 20%);
}

.explorer {
    width: 353px;
    flex: none;
    display: flex;
    flex-direction: column;
    border: 1px solid #8e9bbc;
    border-width: 1px 1px 0 0;
}

.panel-title {
    display: flex;
    align-items: center;
    height: 23px;
    padding: 0 5px 0 3px;
    gap: 2px;
    background: #4d6082;
    color: #fff;
}

.panel-title span {
    flex: 1;
}

.panel-title .icon {
    color: #ced4dd;
    padding: 1px;
}

.panel-tools {
    display: flex;
    align-items: center;
    height: 29px;
    padding-left: 3px;
    background: #cfd6e5;
}

.panel-tools .sep {
    margin: 0 2px;
}

.panel-search {
    display: flex;
    align-items: center;
    height: 24px;
    padding-left: 3px;
    background: #fcfcfc;
    border-top: 1px solid #bec6d9;
    border-bottom: 3px solid #cfd6e5;
}

.panel-search .icon:last-child {
    width: 12px;
    color: #5d6069;
}

.tree {
    flex: 1;
    min-height: 0;
    overflow: hidden;
    margin: 0;
    padding: 2px 0 0;
    list-style: none;
    background: #fff;
}

.tree li {
    display: flex;
    align-items: center;
    height: 19px;
    padding: 2px 0 0 9px;
    white-space: nowrap;
}

.tree .arrow {
    width: 16px;
    height: 16px;
    margin: 0 6px 0 -2px;
    flex: none;
}

.tree .icon {
    margin-right: 5px;
}

.tree .root { padding-left: 11px; }
.tree .l1 { padding-left: 27px; }
.tree .l2 { padding-left: 45px; }
.tree .l3 { padding-left: 63px; }
.tree .l4 { padding-left: 81px; }

.tree .selected {
    background: #cccedb;
}

.quote {
    font-family: "Noto Sans CJK SC", sans-serif;
}

.panel-tabs {
    display: flex;
    height: 4px;
}

.tab-on {
    width: 117px;
    background: #fff;
}

.tab-off {
    width: 61px;
    background: #4d6082;
}

/* ---- editor ---- */
.editor {
    flex: 1;
    min-width: 0;
    margin-left: 6px;
    display: flex;
    flex-direction: column;
    background: #293955;
}

.doc-tabs {
    display: flex;
    align-items: center;
    height: 23px;
    flex: none;
    border-bottom: 2px solid #fff29d;
}

.doc-tab {
    display: flex;
    align-items: center;
    gap: 4px;
    height: 22px;
    padding: 2px 4px 0;
    background: #fff29d;
    white-space: nowrap;
}

.doc-tab .icon {
    color: #75633d;
    padding: 2px;
}

.doc-tab .icon:first-of-type {
    margin-left: 5px;
}

.doc-tabs .list {
    margin-left: auto;
    color: #ced4dd;
}

.upper {
    flex: 16 1 0;
    min-height: 0;
    display: flex;
    flex-direction: column;
    padding: 7px 20px 0 7px;
    background: #f0f0f0;
    border: 2px solid #848484;
    border-width: 2px 2px 0;
    border-right-color: #fff;
    font: 10px/16px "Liberation Mono", monospace;
}

.prop-tabs {
    display: flex;
    align-items: flex-end;
    height: 20px;
    flex: none;
    padding-left: 2px;
}

.prop-tabs button {
    height: 18px;
    padding: 0 5px;
    text-align: left;
    border: 1px solid #898c95;
    border-bottom: 0;
    background: linear-gradient(#f2f2f2, #ebebeb 50%, #dddddd 50%, #cfcfcf);
}

.prop-tabs .t48 {
    width: 48px;
}

.prop-tabs .current {
    height: 21px;
    margin: 0 0 -1px -1px;
    padding: 0 7px;
    background: #fff;
    z-index: 1;
}

.page {
    flex: 1;
    min-height: 0;
    display: flex;
    flex-direction: column;
    padding: 8px 11px 0 14px;
    background: #fff;
    border: 1px solid #898c95;
    border-bottom: 0;
}

.form {
    display: grid;
    grid-template-columns: 129px 1fr;
    grid-auto-rows: 24px;
    column-gap: 21px;
    align-items: center;
    margin: 0 0 6px 1px;
}

.btn {
    height: 17px;
    border: 1px solid #707070;
    border-radius: 3px;
    background: linear-gradient(#f4f4f4, #ebebeb 50%, #dddddd 50%, #cfcfcf);
    box-shadow: inset 0 0 0 1px #fafafa;
    line-height: 14px;
}

.line {
    display: flex;
    align-items: center;
}

.line label {
    display: flex;
    align-items: center;
    gap: 3px;
    padding-top: 3px;
    white-space: nowrap;
    overflow: hidden;
}

.w91 { width: 91px; }
.w88 { width: 88px; }

.line input[type="checkbox"],
.bit input {
    width: 13px;
    height: 13px;
    flex: none;
    appearance: none;
    border: 1px solid #8e8f8f;
    background: linear-gradient(135deg, #cbcfd5, #f6f6f6) content-box #f4f4f4;
    padding: 1px;
}

.line input[type="checkbox"]:checked {
    background: #eef0f6 url("data:image/svg+xml,%3Csvg xmlns='http://www.w3.org/2000/svg' width='11' height='11'%3E%3Cpath d='M2 5l2.500 4L9 1' fill='none' stroke='%2331478d' stroke-width='2'/%3E%3C/svg%3E") center no-repeat;
}

.box {
    height: 19px;
    padding: 0 2px;
    border: 1px solid #e2e3ea;
    border-top-color: #abadb3;
    background: #fff;
    outline: 0;
}

.path { width: 308px; }

.state {
    width: 88px;
    margin-right: 36px;
    color: #007f7f;
}

.port {
    width: 56px;
    margin-left: 2px;
}

.list-box {
    flex: 1;
    min-height: 0;
    display: flex;
    align-items: stretch;
    overflow: hidden;
    border: 1px solid #828790;
    border-bottom: 0;
}

table {
    flex: 1;
    min-width: 0;
    align-self: flex-start;
    table-layout: fixed;
    border-collapse: collapse;
}

th {
    font-weight: normal;
    text-align: left;
    background: linear-gradient(#fff 45%, #f3f4f6 45%, #f1f2f4);
    border-right: 1px solid #dfe1e5;
    border-bottom: 1px solid #d5d5d5;
}

th:last-child {
    border-right: 0;
}

th,
td {
    padding: 0 6px;
    white-space: nowrap;
    overflow: hidden;
}

.coe th {
    height: 24px;
    padding-top: 3px;
}

.coe td {
    height: 17px;
    line-height: 17px;
}

.coe tbody tr:nth-child(odd) td:not(:last-child) {
    background: #dff;
}

.coe td:first-child {
    padding: 0;
}

.coe td:first-child .branch {
    background: #fff;
}

.branch {
    width: 21px;
    height: 17px;
    margin-right: 1px;
    vertical-align: top;
}

.c-index { width: 85px; }
.c-name { width: 200px; }
.c-flags { width: 70px; }
.c-value { width: 251px; }

.scroll {
    width: 17px;
    flex: none;
    display: flex;
    flex-direction: column;
    background: #f0f0f0;
}

.scroll .up {
    height: 18px;
    flex: none;
    background: url("data:image/svg+xml,%3Csvg xmlns='http://www.w3.org/2000/svg' width='7' height='4'%3E%3Cpath d='M0 4h7L3.500 0z' fill='%23444'/%3E%3C/svg%3E") center no-repeat;
}

.scroll .thumb {
    margin: 0 1px;
    border: 1px solid #979797;
    border-radius: 2px;
    background: repeating-linear-gradient(#666 0 1px, transparent 1px 3px) center / 8px 8px no-repeat, linear-gradient(90deg, #f3f3f3, #e6e6e8 45%, #c9c9cf 50%, #d9d9dd);
}

.coe-scroll .before { flex: 118; }
.coe-scroll .thumb { flex: 74; }
.coe-scroll .after { flex: 43; }
.var-scroll .thumb { flex: 164; }
.var-scroll .after { flex: 23; }

.lower {
    flex: 9 1 0;
    min-height: 0;
    display: flex;
    overflow: hidden;
    background: #fff;
    border-top: 2px solid #696969;
    border-left: 2px solid #848484;
    border-right: 2px solid #fff;
    margin-top: 5px;
    box-shadow: 0 -5px #f0f0f0;
}

.vars th {
    height: 24px;
    padding-top: 1px;
}

.vars th,
.vars td {
    padding-left: 7px;
}

.vars td {
    height: 21px;
    line-height: 20px;
}

.vars td:first-child {
    padding-left: 6px;
}

.var {
    width: 13px;
    height: 12px;
    margin-right: 4px;
    vertical-align: -1px;
}

.v-name { width: 120px; }
.v-gap { width: 20px; }
.v-online { width: 120px; }
.v-type { width: 80px; }
.v-size { width: 50px; }
.v-addr { width: 58px; }
.v-io { width: 50px; }
.v-link { width: 150px; }

.side {
    width: 25px;
    flex: none;
    display: flex;
    flex-direction: column;
    align-items: center;
    gap: 12px;
    padding-left: 2px;
    background: #293955;
    color: #fff;
}

.side a {
    writing-mode: vertical-rl;
    text-orientation: sideways;
    line-height: 16px;
}

/* ---- value dialog ---- */
.dialog {
    position: absolute;
    left: 910px;
    top: 208px;
    width: 364px;
    padding: 0 6px 7px;
    border: 1px solid #1f2a3a;
    border-radius: 7px;
    background: linear-gradient(100deg, #dcebfa, #b5d3f2 35%, #c6def6 60%, #a9cdf2);
    box-shadow: inset 0 0 0 1px #eef7ff, 0 2px 14px 4px rgba(0, 0, 0, 0.7);
}

.dlg-bar {
    display: flex;
    justify-content: space-between;
    height: 28px;
    padding-left: 1px;
    line-height: 28px;
}

.dlg-close {
    display: flex;
    align-items: center;
    justify-content: center;
    width: 47px;
    height: 19px;
    border: 1px solid #5b2222;
    border-top: 0;
    border-radius: 0 0 5px 5px;
    background: linear-gradient(#e5a696, #d0705c 45%, #b53a22 50%, #cf6a4c);
}

.dlg-body {
    margin: 0;
    padding: 8px 11px;
    background: #f0f0f0;
    border: 1px solid #5f6f80;
    font: 11px/16px "Liberation Sans", sans-serif;
}

.row {
    display: flex;
    align-items: center;
    height: 26px;
}

.row > label:first-child,
.label {
    width: 75px;
    flex: none;
}

.row .box {
    width: 141px;
    height: 21px;
}

.row .focus {
    border-color: #3d7bad #a4c9e3 #b7d9ed;
}

.row .grey {
    background: #f0f0f0;
}

.row .box:disabled {
    border: 1px solid #afafaf;
    background: #f4f4f4;
}

.row .wide {
    width: 209px;
}

.row .len {
    width: 32px;
}

.row .btn {
    width: 74px;
    height: 19px;
}

.row > :last-child:not(.box):not(.bit),
.row .len {
    margin-left: auto;
}

.row .bool {
    width: 50px;
    margin-right: 10px;
}

.row .ok {
    border-color: #3c7fb1;
    box-shadow: inset 0 0 0 1px #48d1f2;
}

.bit {
    display: flex;
    align-items: center;
    gap: 4px;
    width: 36px;
}

.bit.one {
    width: 33px;
}

.bit.two {
    width: 42px;
}

.bit input {
    border-radius: 50%;
}

.bit input:checked {
    background: radial-gradient(circle at 40% 40%, #4fb5e8 1px, #12466e 3px, #e8eef2 4px);
}

/* ---- step marks ---- */
.marks {
    position: absolute;
    left: 0;
    top: 0;
    width: 100%;
    height: 100%;
    pointer-events: none;
}

.step {
    position: absolute;
    margin: 0;
    color: #ff2010;
    font-size: 21px;
    line-height: 24px;
    white-space: nowrap;
}

.s1 { left: 671px; top: 180px; }
.s2 { left: 181px; top: 336px; }
.s3 { left: 772px; top: 334px; }
.s4 { left: 1123px; top: 325px; }
.s5 { left: 720px; top: 565px; }
```
